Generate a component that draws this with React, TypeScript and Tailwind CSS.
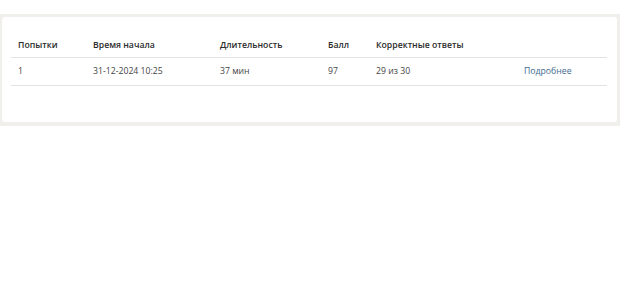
import React from "react";

const attempts = [
	{ id: 1, started: "31-12-2024 10:25", duration: "37 мин", score: 97, correct: "29 из 30" },
];

const App = () => {
	return (
		<div className="h-screen w-full bg-white pt-[14px] font-['Open_Sans',sans-serif]">
			<div className="w-[620px] bg-[#f0efeb] pt-[3px] pb-[4px] pl-[2px] pr-[3px]">
				<div className="bg-white rounded-[3px] px-[9px] pt-[16px] pb-[36px]">
					<table className="w-[596px] table-fixed border-collapse text-[8.7px]">
						<colgroup>
							<col className="w-[75px]" />
							<col className="w-[127px]" />
							<col className="w-[108px]" />
							<col className="w-[48px]" />
							<col className="w-[148px]" />
							<col />
						</colgroup>
						<thead>
							<tr className="h-[24px] border-b border-[#e3e3e3] text-left text-[#2b2b2b]">
								<th className="pl-[7px] pt-[2px] font-semibold">Попытки</th>
								<th className="pl-[7px] pt-[2px] font-semibold">Время начала</th>
								<th className="pl-[7px] pt-[2px] font-semibold">Длительность</th>
								<th className="pl-[7px] pt-[2px] font-semibold">Балл</th>
								<th className="pl-[7px] pt-[2px] font-semibold">Корректные ответы</th>
								<th></th>
							</tr>
						</thead>
						<tbody>
							{attempts.map((a) => (
								<tr key={a.id} className="h-[28px] border-b border-[#e3e3e3] text-[#444]">
									<td className="pl-[7px] pt-[1px]">{a.id}</td>
									<td className="pl-[7px] pt-[1px]">{a.started}</td>
									<td className="pl-[7px] pt-[1px]">{a.duration}</td>
									<td className="pl-[7px] pt-[1px]">{a.score}</td>
									<td className="pl-[7px] pt-[1px]">{a.correct}</td>
									<td className="pl-[7px] pt-[1px]">
										<a href="#" className="text-[#3e6a92]">
											Подробнее
										</a>
									</td>
								</tr>
							))}
						</tbody>
					</table>
				</div>
			</div>
		</div>
	);
};

export default App;
